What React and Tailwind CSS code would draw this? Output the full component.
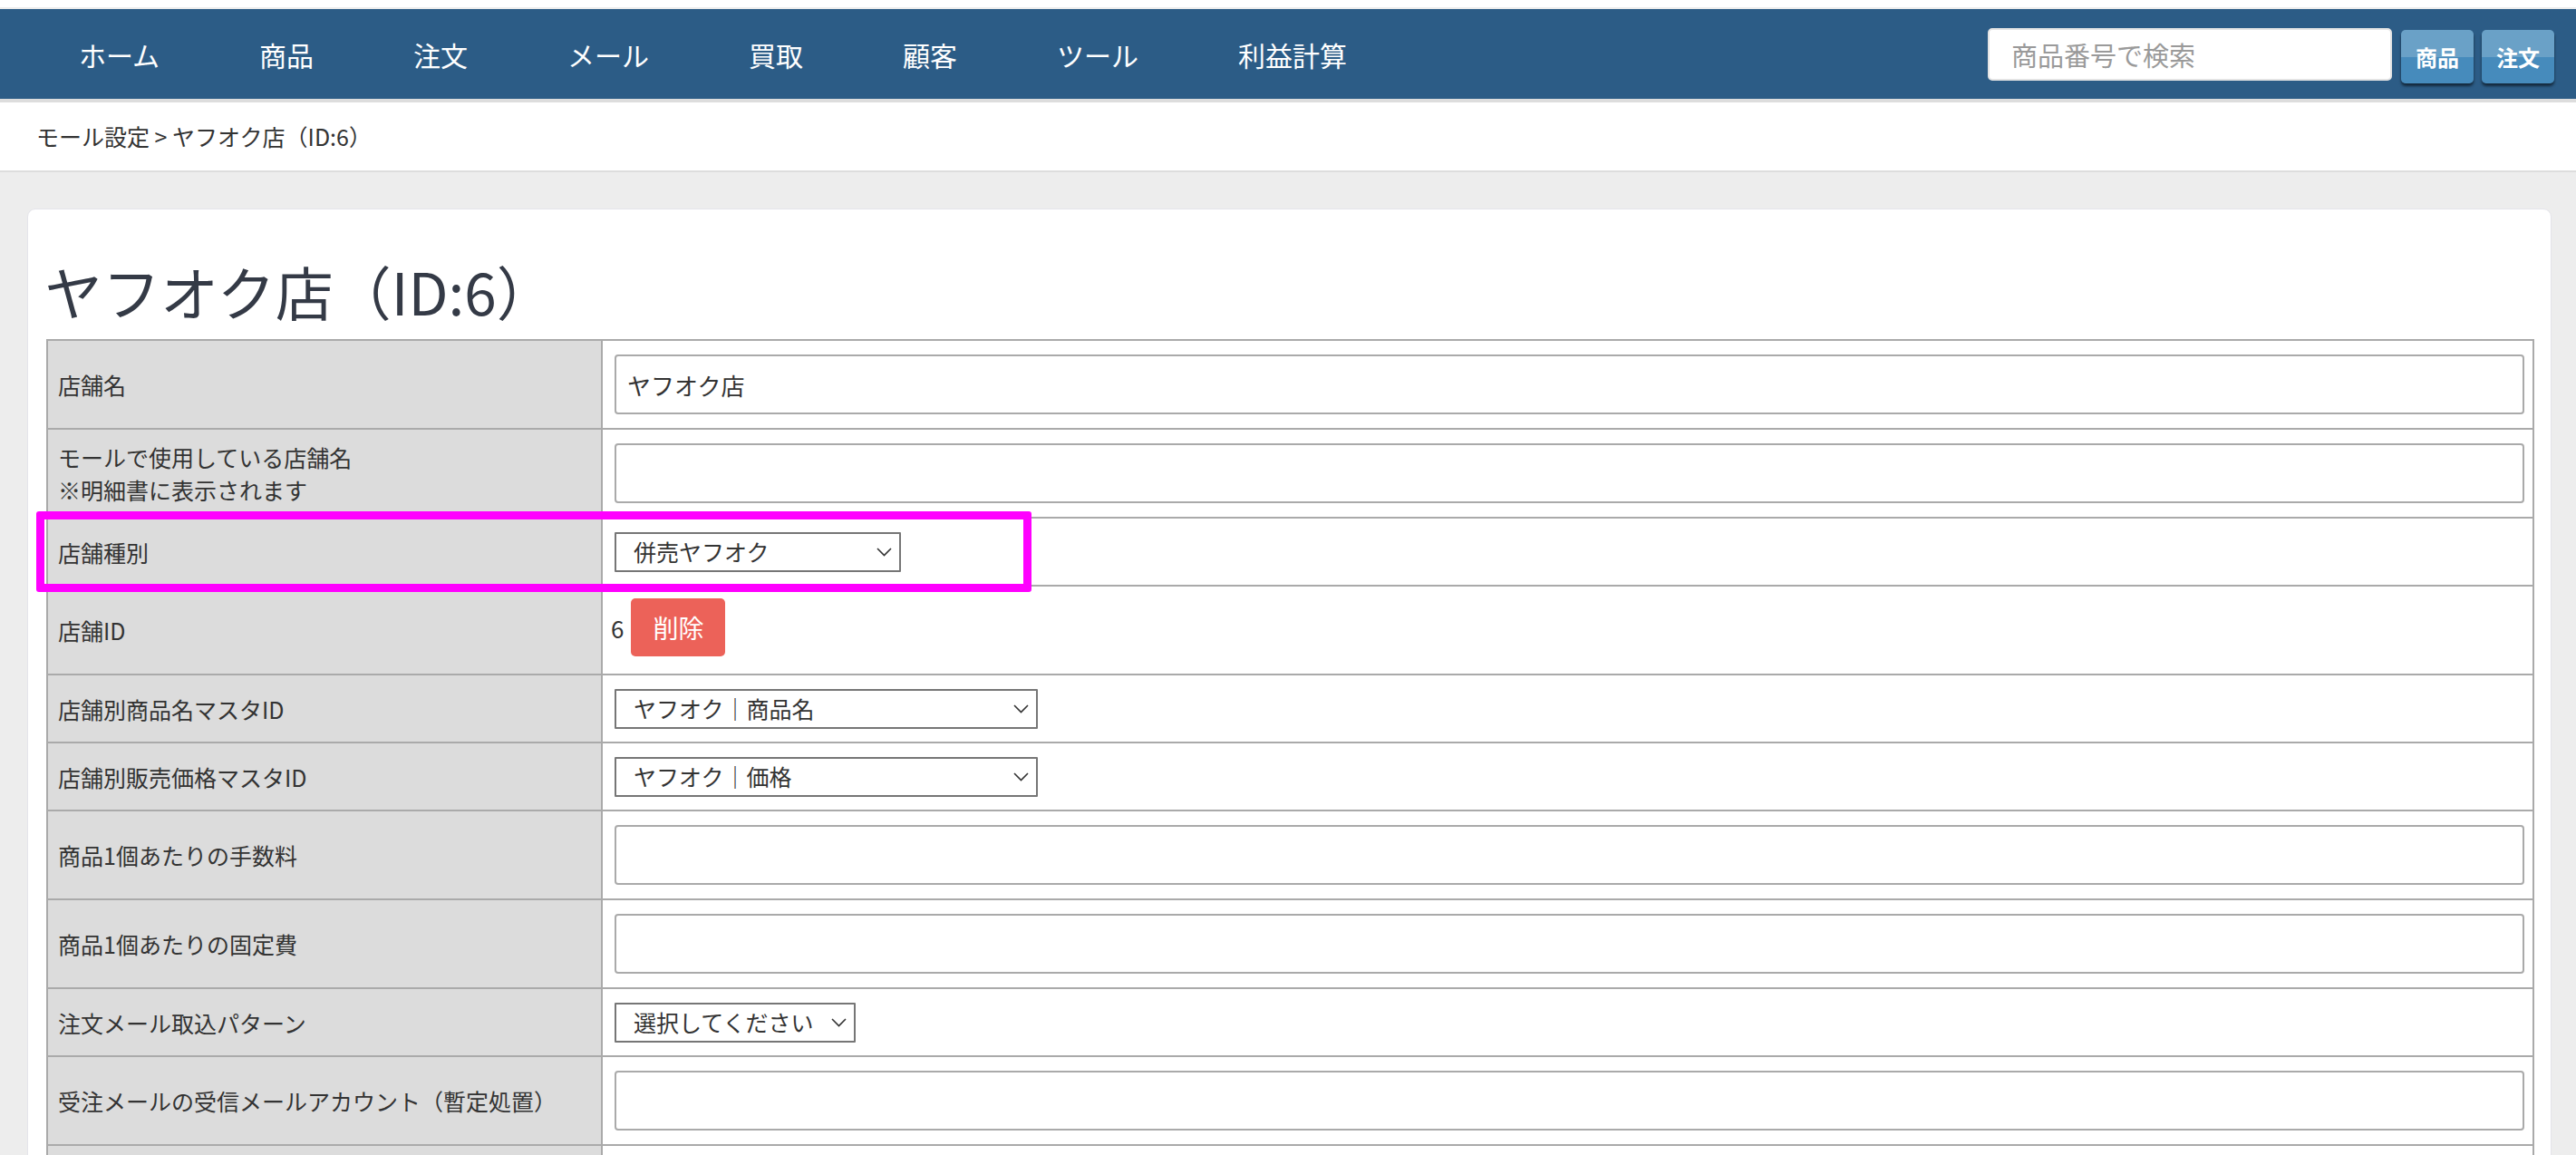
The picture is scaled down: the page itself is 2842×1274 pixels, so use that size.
import React from 'react';

const navItems = ['ホーム', '商品', '注文', 'メール', '買取', '顧客', 'ツール', '利益計算'];

function Chevron() {
  return (
    <svg className="absolute right-[10px] top-1/2 -translate-y-1/2 pointer-events-none" width="17" height="10" viewBox="0 0 17 10" fill="none">
      <polyline points="1,1 8.5,8.5 16,1" stroke="#333" strokeWidth="1.6" />
    </svg>
  );
}

function Select({ width, options }) {
  return (
    <div className={`relative h-[44px] ${width}`}>
      <select
        defaultValue={options[0]}
        className="block appearance-none w-full h-full bg-white border-2 border-[#767676] rounded-[1px] pl-[19px] pr-[36px] text-[25px] text-[#333] outline-none"
      >
        {options.map(o => (
          <option key={o} value={o}>{o}</option>
        ))}
      </select>
      <Chevron />
    </div>
  );
}

function TextInput({ value = '' }) {
  return (
    <input
      type="text"
      defaultValue={value}
      className="block w-full h-[66px] bg-white border-2 border-[#aaa] rounded-[4px] pl-[12px] text-[26px] text-[#333] outline-none"
    />
  );
}

function Row({ label, children, cellClass = 'py-[15px]' }) {
  return (
    <tr>
      <td className="bg-[#dcdcdc] border-2 border-[#aaa] pl-[11px] pr-[10px] text-[25px] leading-[36px] text-[#333] align-middle">
        {label}
      </td>
      <td className={`border-2 border-[#aaa] pl-[13px] pr-[9px] align-middle ${cellClass}`}>
        {children}
      </td>
    </tr>
  );
}

const selectCell = 'pt-[15px] pb-[14px]';

export default function App() {
  return (
    <div className="min-h-screen bg-[#ededed] text-[#333] font-['Noto_Sans_CJK_JP','Noto_Sans',sans-serif]">
      {/* header */}
      <div className="h-[10px] bg-white border-b-2 border-[#ececec]" />
      <nav className="h-[99px] bg-[#2c5c86] flex items-center justify-between">
        <ul className="flex pl-[32px]">
          {navItems.map(item => (
            <li key={item} className="px-[55px] text-[30px] text-white leading-none">{item}</li>
          ))}
        </ul>
        <div className="flex items-center pr-[24px]">
          <input
            type="text"
            placeholder="商品番号で検索"
            className="w-[446px] h-[58px] bg-white border-2 border-[#e4e4e4] rounded-[5px] pl-[24px] text-[29px] text-[#333] placeholder:text-[#9a9a9a] outline-none"
          />
          <button className="ml-[10px] mt-[6px] w-[80px] h-[59px] rounded-[5px] bg-[linear-gradient(to_bottom,#6aa1c7_50%,#468bbc_50%)] shadow-[0_3px_3px_rgba(0,0,0,0.55)] text-white font-bold text-[24px]">
            商品
          </button>
          <button className="ml-[9px] mt-[6px] w-[80px] h-[59px] rounded-[5px] bg-[linear-gradient(to_bottom,#6aa1c7_50%,#468bbc_50%)] shadow-[0_3px_3px_rgba(0,0,0,0.55)] text-white font-bold text-[24px]">
            注文
          </button>
        </div>
      </nav>
      <div className="h-[4px] bg-[#dddddd]" />

      {/* breadcrumb */}
      <div className="h-[77px] bg-white border-b-2 border-[#dddddd] flex items-center pl-[40px] text-[25px] text-[#333]">
        モール設定 &gt; ヤフオク店（ID:6）
      </div>

      {/* main */}
      <div className="pt-[40px] pl-[30px] pr-[27px]">
        <div className="bg-white rounded-[9px] border border-[#e4e4ea] pl-[20px] pr-[18px] pt-[54px] pb-[40px]">
          <h1 className="text-[64px] leading-[70px] text-[#343a46] font-normal mb-[19px] -ml-[2px]">ヤフオク店（ID:6）</h1>

          <div className="relative">
            <table className="w-full table-fixed border-collapse border-2 border-[#aaa]">
              <colgroup>
                <col className="w-[612px]" />
                <col />
              </colgroup>
              <tbody>
                <Row label="店舗名">
                  <TextInput value="ヤフオク店" />
                </Row>
                <Row label={<>モールで使用している店舗名<br />※明細書に表示されます</>}>
                  <TextInput />
                </Row>
                <Row label="店舗種別" cellClass={selectCell}>
                  <Select width="w-[316px]" options={['併売ヤフオク', '単独ヤフオク']} />
                </Row>
                <Row label="店舗ID" cellClass="pt-[12px] pb-[18px]">
                  <div className="h-[66px] flex items-center">
                    <span className="text-[26px] text-[#333] ml-[-4px]">6</span>
                    <button className="ml-[8px] w-[104px] h-[64px] rounded-[5px] bg-[#ec6259] text-white text-[28px]">
                      削除
                    </button>
                  </div>
                </Row>
                <Row label="店舗別商品名マスタID" cellClass={selectCell}>
                  <Select width="w-[467px]" options={['ヤフオク｜商品名']} />
                </Row>
                <Row label="店舗別販売価格マスタID" cellClass={selectCell}>
                  <Select width="w-[467px]" options={['ヤフオク｜価格']} />
                </Row>
                <Row label="商品1個あたりの手数料">
                  <TextInput />
                </Row>
                <Row label="商品1個あたりの固定費">
                  <TextInput />
                </Row>
                <Row label="注文メール取込パターン" cellClass={selectCell}>
                  <Select width="w-[266px]" options={['選択してください']} />
                </Row>
                <Row label="受注メールの受信メールアカウント（暫定処置）">
                  <TextInput />
                </Row>
                <Row label="受注メールの受信メールパスワード（暫定処置）">
                  <TextInput />
                </Row>
              </tbody>
            </table>

            {/* highlight */}
            <div className="absolute left-[-11px] top-[190px] w-[1098px] h-[89px] border-[9px] border-[#ff00ff] rounded-[3px] pointer-events-none" />
          </div>
        </div>
      </div>
    </div>
  );
}
